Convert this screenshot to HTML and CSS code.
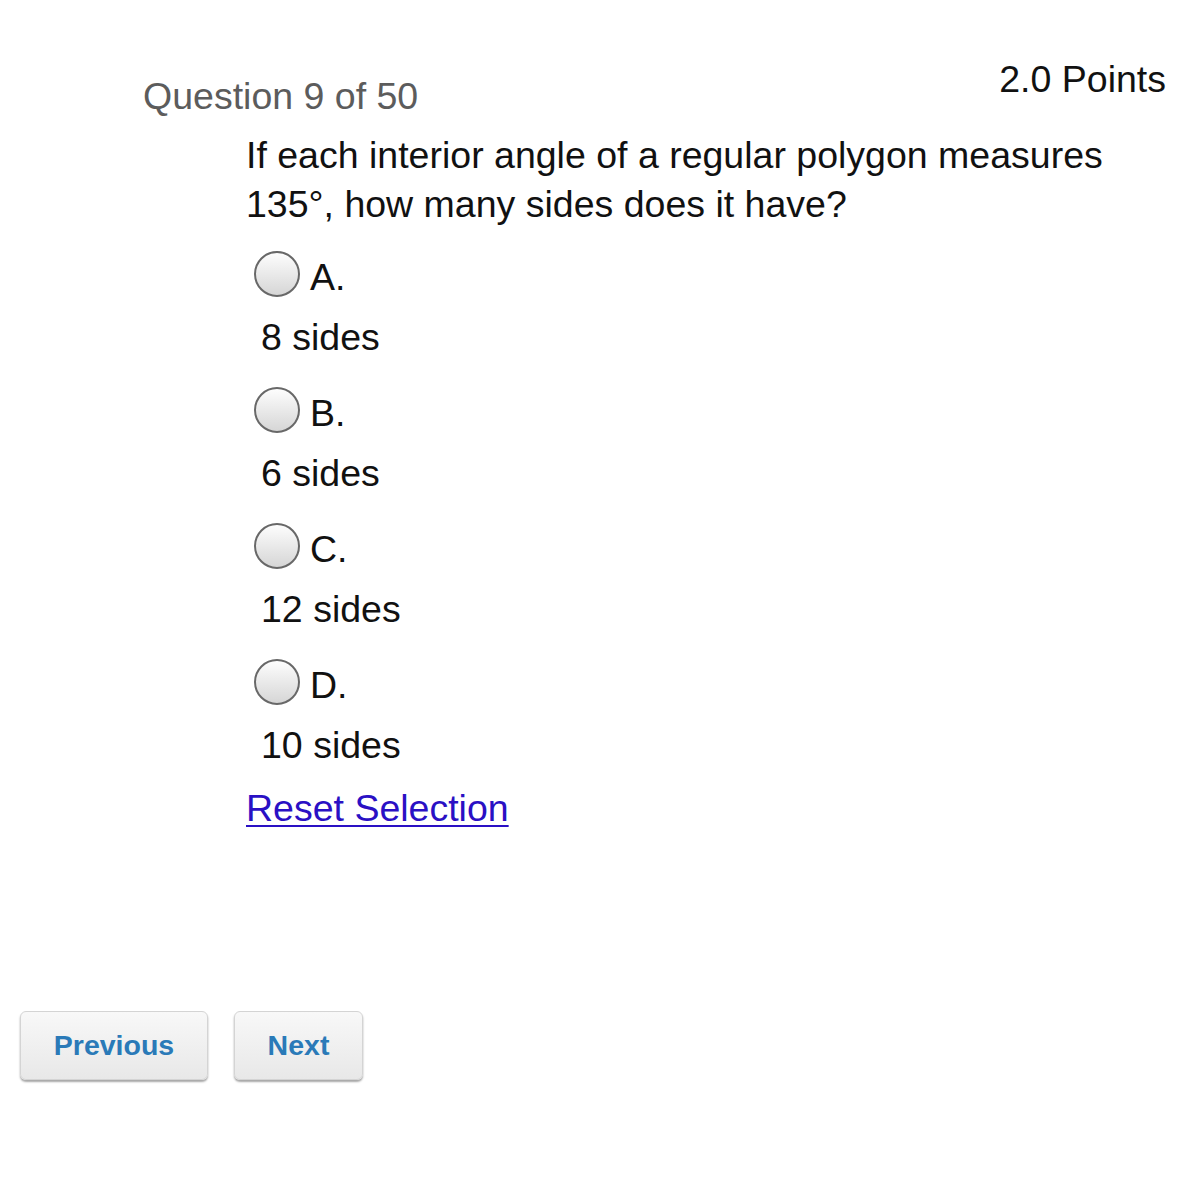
FILE: index.html
```html
<!DOCTYPE html>
<html>
<head>
<meta charset="utf-8">
<link rel="stylesheet" href="styles.css">
</head>
<body>
<div class="page">
  <div class="header">
    <div class="qnum">Question 9 of 50</div>
    <div class="points">2.0 Points</div>
  </div>
  <div class="body">
    <p class="prompt">If each interior angle of a regular polygon measures 135°, how many sides does it have?</p>
    <div class="option">
      <div class="opt-head"><span class="radio"></span><span class="letter">A.</span></div>
      <div class="answer">8 sides</div>
    </div>
    <div class="option">
      <div class="opt-head"><span class="radio"></span><span class="letter">B.</span></div>
      <div class="answer">6 sides</div>
    </div>
    <div class="option">
      <div class="opt-head"><span class="radio"></span><span class="letter">C.</span></div>
      <div class="answer">12 sides</div>
    </div>
    <div class="option">
      <div class="opt-head"><span class="radio"></span><span class="letter">D.</span></div>
      <div class="answer">10 sides</div>
    </div>
    <a class="reset" href="#">Reset Selection</a>
  </div>
  <div class="nav">
    <button class="btn btn-prev">Previous</button>
    <button class="btn btn-next">Next</button>
  </div>
</div>
</body>
</html>
```
FILE: styles.css
```css
html, body {
  margin: 0;
  padding: 0;
  background: #fff;
}
body {
  font-family: "Liberation Sans", Arial, sans-serif;
  color: #111;
}
.page {
  width: 1198px;
  height: 1200px;
  position: relative;
}
.header {
  display: flex;
  justify-content: space-between;
  align-items: flex-start;
  padding: 59px 32px 0 143px;
}
.qnum {
  font-size: 37.5px;
  color: #5c5c5c;
  margin-top: 17px;
  line-height: 40px;
}
.points {
  font-size: 37.5px;
  color: #111;
  line-height: 40px;
}
.body {
  padding-left: 246px;
}
.prompt {
  width: 880px;
  margin: 15px 0 0 0;
  padding-bottom: 4px;
  font-size: 37.5px;
  line-height: 49px;
}
.option {
  margin-top: 16px;
}
.opt-head {
  display: flex;
  align-items: center;
  height: 56px;
  padding-left: 8px;
}
.radio {
  width: 46px;
  height: 46px;
  margin-bottom: 6px;
  border-radius: 50%;
  border: 2px solid #686868;
  background: linear-gradient(#fdfdfd, #d6d6d6);
  box-sizing: border-box;
  flex: none;
}
.letter {
  font-size: 37.5px;
  margin-left: 10px;
}
.answer {
  font-size: 37.5px;
  line-height: 64px;
  padding-left: 15px;
}
.reset {
  display: inline-block;
  margin-top: 10px;
  font-size: 37.5px;
  line-height: 42px;
  color: #2a10c4;
  text-decoration: underline;
  text-decoration-thickness: 2px;
  text-underline-offset: 4px;
}
.nav {
  position: absolute;
  left: 20px;
  top: 1011px;
  display: flex;
  gap: 26px;
}
.btn {
  height: 69px;
  border: 1px solid #d4d4d4;
  border-radius: 6px;
  background: linear-gradient(#f8f8f8, #e8e8e8);
  box-shadow: 0 2px 2px rgba(0,0,0,0.35);
  font-family: "Liberation Sans", Arial, sans-serif;
  font-weight: bold;
  font-size: 28.5px;
  color: #2a7ab8;
}
.btn-prev { width: 188px; }
.btn-next { width: 129px; }
```
